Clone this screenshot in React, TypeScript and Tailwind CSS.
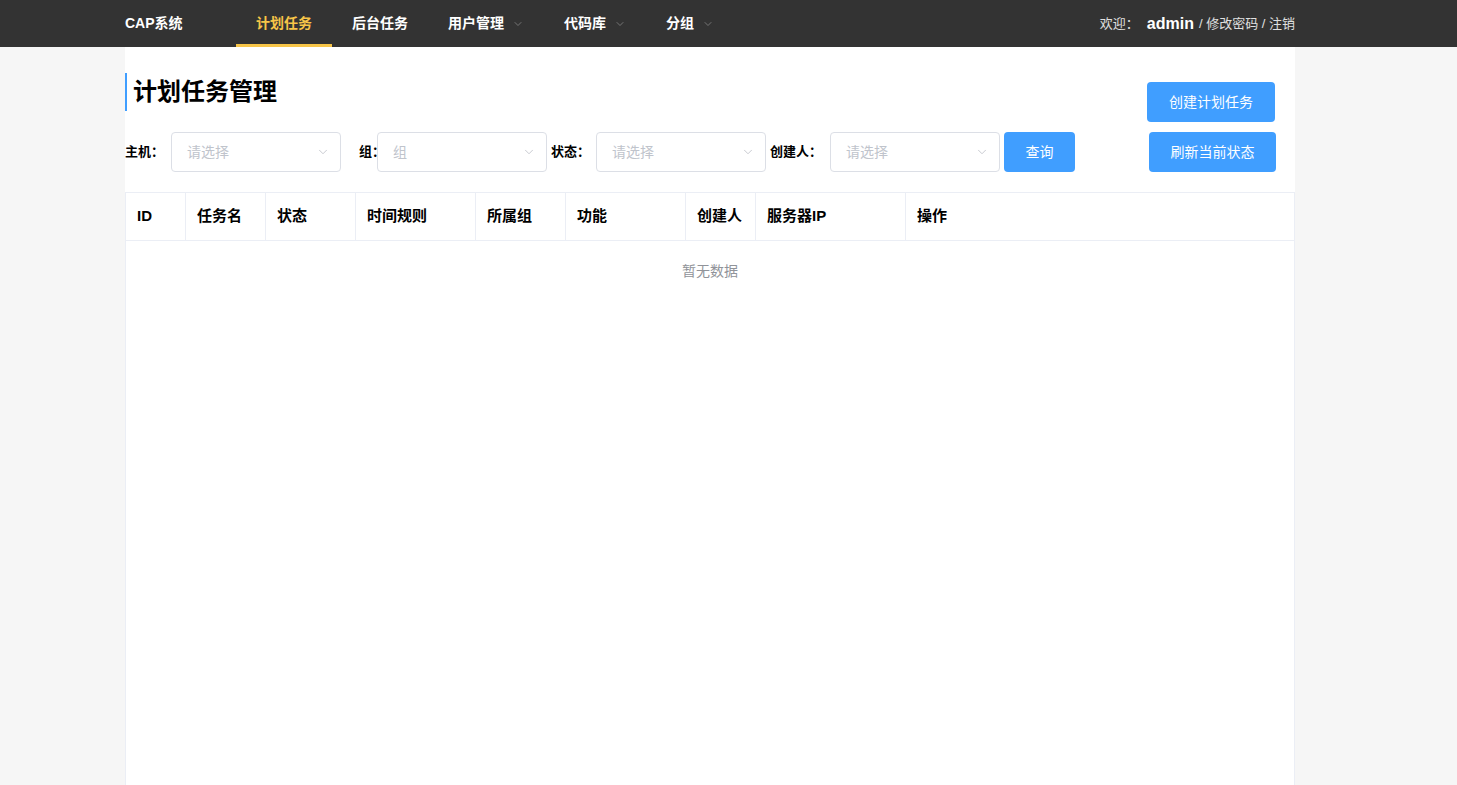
import { ChevronDown } from "lucide-react";

const NAV_ITEMS = [
  { label: "计划任务", active: true, dropdown: false },
  { label: "后台任务", active: false, dropdown: false },
  { label: "用户管理", active: false, dropdown: true },
  { label: "代码库", active: false, dropdown: true },
  { label: "分组", active: false, dropdown: true },
];

const COLUMNS = [
  { title: "ID", width: "w-[60px]" },
  { title: "任务名", width: "w-[80px]" },
  { title: "状态", width: "w-[90px]" },
  { title: "时间规则", width: "w-[120px]" },
  { title: "所属组", width: "w-[90px]" },
  { title: "功能", width: "w-[120px]" },
  { title: "创建人", width: "w-[70px]" },
  { title: "服务器IP", width: "w-[150px]" },
  { title: "操作", width: "flex-1" },
];

const TopBar = () => (
  <header className="h-[47px] bg-[#333333] shrink-0">
    <div className="w-[1170px] ml-[125px] h-full flex items-center">
      <div className="text-[14px] font-bold text-white w-[111px]">CAP系统</div>
      <nav className="flex h-full">
        {NAV_ITEMS.map((item) => (
          <div
            key={item.label}
            className={`relative h-full flex items-center px-[20px] text-[14px] font-semibold ${
              item.active ? "text-[#f7c548]" : "text-white"
            }`}
          >
            <span>{item.label}</span>
            {item.dropdown && (
              <ChevronDown className="ml-[8px] w-[12px] h-[12px] text-[#8a8a8a]" strokeWidth={1.5} />
            )}
            {item.active && (
              <span className="absolute left-0 right-0 bottom-0 h-[3px] bg-[#f7c548]" />
            )}
          </div>
        ))}
      </nav>
      <div className="ml-auto flex items-center text-[13px] text-[#e0e0e0]">
        <span>欢迎：</span>
        <span className="ml-[8px] text-[16px] font-bold text-white">admin</span>
        <span className="ml-[5px]">/ 修改密码 / 注销</span>
      </div>
    </div>
  </header>
);

const FakeSelect = ({ placeholder }: { placeholder: string }) => (
  <div className="w-[170px] h-[40px] border border-[#dcdfe6] rounded-[4px] bg-white flex items-center pl-[15px] pr-[10px]">
    <span className="text-[14px] font-normal text-[#c0c4cc] flex-1">{placeholder}</span>
    <ChevronDown className="w-[14px] h-[14px] text-[#b4b8c0]" strokeWidth={1.25} />
  </div>
);

const FilterBar = () => (
  <div className="flex items-center text-[13px] font-bold text-black">
    <span className="w-[46px]">主机：</span>
    <FakeSelect placeholder="请选择" />
    <span className="ml-[18px] w-[18px] whitespace-nowrap">组：</span>
    <FakeSelect placeholder="组" />
    <span className="ml-[4px] w-[45px]">状态：</span>
    <FakeSelect placeholder="请选择" />
    <span className="ml-[4px] w-[60px]">创建人：</span>
    <FakeSelect placeholder="请选择" />
    <button className="ml-[4px] w-[71px] h-[40px] rounded-[4px] bg-[#409eff] text-white text-[14px] font-normal">
      查询
    </button>
  </div>
);

const TaskTable = () => (
  <div className="flex-1 flex flex-col border-l border-r border-[#ebeef5] border-t">
    <div className="flex h-[48px] border-b border-[#ebeef5]">
      {COLUMNS.map((col, i) => (
        <div
          key={col.title}
          className={`${col.width} flex items-center pl-[11px] text-[15px] font-bold text-black ${
            i < COLUMNS.length - 1 ? "border-r border-[#ebeef5]" : ""
          }`}
        >
          {col.title}
        </div>
      ))}
    </div>
    <div className="h-[60px] flex items-center justify-center text-[14px] text-[#909399]">
      暂无数据
    </div>
  </div>
);

export default function App() {
  return (
    <div
      className="min-h-screen flex flex-col bg-[#f6f6f6]"
      style={{ fontFamily: '"Liberation Sans", "Noto Sans CJK SC", sans-serif' }}
    >
      <TopBar />
      <main className="flex-1 w-[1170px] ml-[125px] bg-white flex flex-col">
        <div className="flex items-start justify-between pt-[26px] pb-[20px]">
          <div className="flex flex-col">
            <h1 className="h-[38px] border-l-2 border-[#409eff] pl-[6px] flex items-center text-[24px] font-bold text-black">
              计划任务管理
            </h1>
            <div className="mt-[21px]">
              <FilterBar />
            </div>
          </div>
          <div className="flex flex-col items-end gap-[10px] pt-[9px]">
            <button className="mr-[20px] w-[128px] h-[40px] rounded-[4px] bg-[#409eff] text-white text-[14px]">
              创建计划任务
            </button>
            <button className="mr-[19px] w-[127px] h-[40px] rounded-[4px] bg-[#409eff] text-white text-[14px]">
              刷新当前状态
            </button>
          </div>
        </div>
        <TaskTable />
      </main>
    </div>
  );
}
